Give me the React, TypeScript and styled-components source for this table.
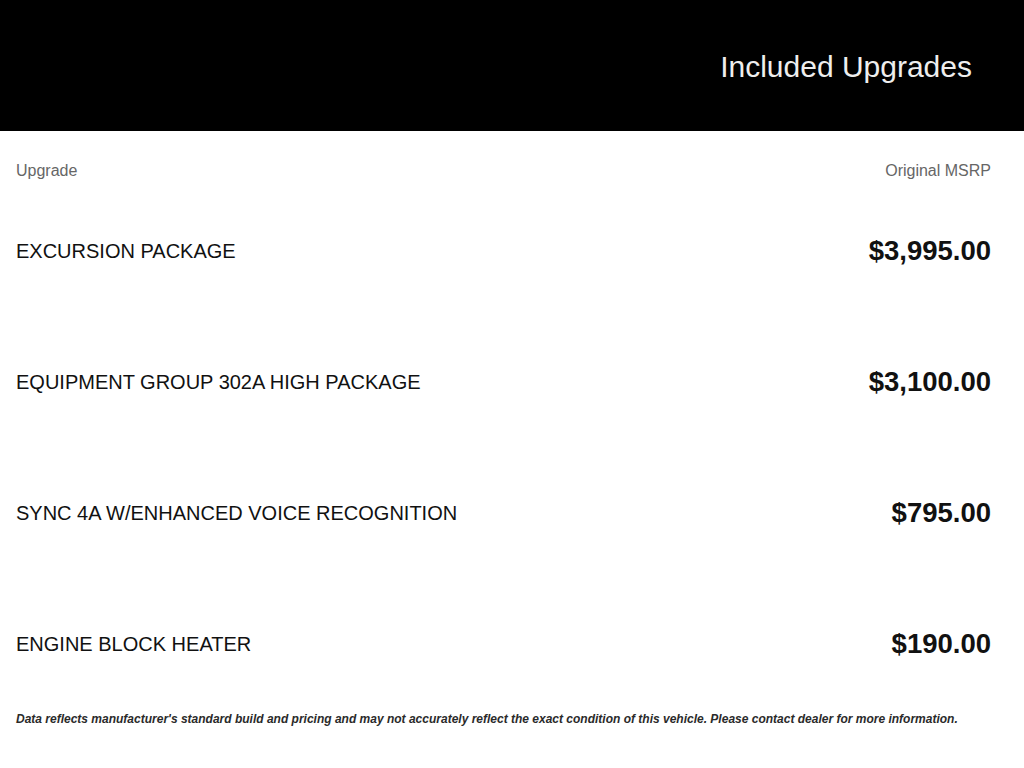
import React from "react";
import styled, { createGlobalStyle } from "styled-components";

const Global = createGlobalStyle`
  html, body { margin: 0; padding: 0; background: #ffffff; }
  body { font-family: "Liberation Sans", Arial, sans-serif; }
`;

const Page = styled.div`
  width: 1024px;
  height: 768px;
  background: #ffffff;
  display: flex;
  flex-direction: column;
  overflow: hidden;
`;

const Banner = styled.header`
  height: 131px;
  background: #000000;
  display: flex;
  align-items: center;
  justify-content: flex-end;
  padding: 2px 52px 0 0;
  box-sizing: border-box;
`;

const Title = styled.h1`
  margin: 0;
  font-size: 30px;
  font-weight: 400;
  color: #eeeeee;
  line-height: 34px;
`;

const Body = styled.section`
  padding: 0 33px 0 16px;
  display: flex;
  flex-direction: column;
`;

const ColumnHeader = styled.div`
  display: flex;
  justify-content: space-between;
  padding: 31px 0 4px;
  font-size: 16px;
  line-height: 18px;
  color: #666666;
`;

const Row = styled.div`
  height: 131px;
  box-sizing: border-box;
  padding-top: 3px;
  display: flex;
  align-items: center;
  justify-content: space-between;
`;

const Name = styled.span`
  font-size: 20px;
  color: #111111;
`;

const Price = styled.span`
  font-size: 27.5px;
  font-weight: 700;
  color: #111111;
`;

const Footnote = styled.p`
  margin: 4px 0 0;
  font-size: 12px;
  line-height: 14px;
  font-style: italic;
  font-weight: 700;
  color: #2a2a2a;
`;

const upgrades = [
  { name: "EXCURSION PACKAGE", price: "$3,995.00" },
  { name: "EQUIPMENT GROUP 302A HIGH PACKAGE", price: "$3,100.00" },
  { name: "SYNC 4A W/ENHANCED VOICE RECOGNITION", price: "$795.00" },
  { name: "ENGINE BLOCK HEATER", price: "$190.00" },
];

export default function App() {
  return (
    <>
      <Global />
      <Page>
        <Banner>
          <Title>Included Upgrades</Title>
        </Banner>
        <Body>
          <ColumnHeader>
            <span>Upgrade</span>
            <span>Original MSRP</span>
          </ColumnHeader>
          {upgrades.map((u) => (
            <Row key={u.name}>
              <Name>{u.name}</Name>
              <Price>{u.price}</Price>
            </Row>
          ))}
          <Footnote>
            Data reflects manufacturer's standard build and pricing and may not accurately reflect the exact condition of this vehicle. Please contact dealer for more information.
          </Footnote>
        </Body>
      </Page>
    </>
  );
}
